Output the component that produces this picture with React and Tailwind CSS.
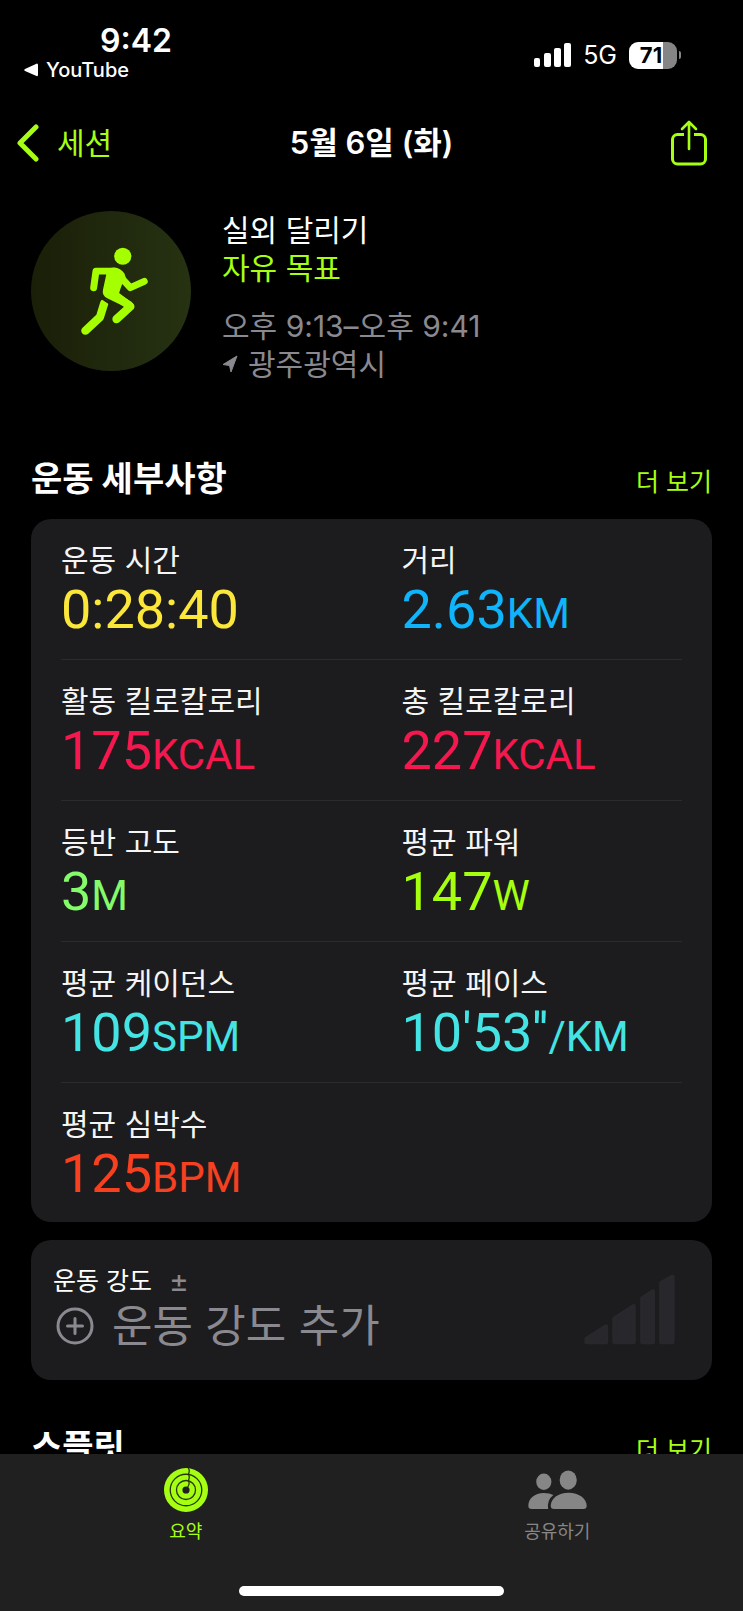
const metricRows = [
    [
        { label: "운동 시간", value: "0:28:40", unit: "", color: "text-[#fbe63a]" },
        { label: "거리", value: "2.63", unit: "KM", color: "text-[#0fb4fb]" },
    ],
    [
        { label: "활동 킬로칼로리", value: "175", unit: "KCAL", color: "text-[#f5184f]" },
        { label: "총 킬로칼로리", value: "227", unit: "KCAL", color: "text-[#f5184f]" },
    ],
    [
        { label: "등반 고도", value: "3", unit: "M", color: "text-[#84fb6a]" },
        { label: "평균 파워", value: "147", unit: "W", color: "text-[#a6ff0f]" },
    ],
    [
        { label: "평균 케이던스", value: "109", unit: "SPM", color: "text-[#45e4e4]" },
        { label: "평균 페이스", value: "10'53''", unit: "/KM", color: "text-[#45e4e4]" },
    ],
    [
        { label: "평균 심박수", value: "125", unit: "BPM", color: "text-[#f6401f]" },
    ],
]

function SignalIcon() {
    return (
        <svg width="37" height="24" viewBox="0 0 37 24" fill="currentColor" aria-hidden="true">
            <rect x="0" y="15" width="6" height="9" rx="2" />
            <rect x="10" y="10" width="7" height="14" rx="2" />
            <rect x="20" y="5" width="7" height="19" rx="2" />
            <rect x="30" y="0" width="7" height="24" rx="2" />
        </svg>
    )
}

function ShareIcon() {
    return (
        <svg
            width="36"
            height="46"
            viewBox="0 0 36 46"
            fill="none"
            stroke="currentColor"
            strokeWidth="3"
            strokeLinecap="round"
            strokeLinejoin="round"
            aria-hidden="true"
        >
            <path d="M13 14.500H6.500a5 5 0 0 0-5 5V39a5 5 0 0 0 5 5h23a5 5 0 0 0 5-5V19.500a5 5 0 0 0-5-5H23" strokeLinecap="butt" />
            <path d="M18 29V2.500M11 9l7-7 7 7" strokeWidth="2.600" />
        </svg>
    )
}

function RunnerIcon() {
    return (
        <svg className="h-[88px] w-[67px]" viewBox="241 170 202 266" aria-hidden="true">
            <g fill="none" stroke="#a6ff00" strokeLinecap="round" strokeLinejoin="round">
                <path d="M340 243H286L279 293" strokeWidth="21" />
                <path d="M354 254L390 293L432 274" strokeWidth="21" />
                <path d="M328 304L390 350L348 388" strokeWidth="25" />
                <path d="M311 340L298 382L254 423" strokeWidth="25" />
            </g>
            <path
                d="M312 236L342 232Q360 233 372 250L376 262Q366 276 360 296L355 312L394 336Q404 346 400 356L380 362L376 352L320 325Q304 316 307 300L317 254Z"
                fill="#a6ff00"
            />
            <circle cx="367" cy="198" r="26" fill="#a6ff00" />
            <path d="M294 318L332 343" stroke="#1f280e" strokeWidth="7" />
        </svg>
    )
}

function EffortBars() {
    return (
        <svg width="91" height="71" viewBox="638 166 274 212" fill="#28272c" stroke="#28272c" strokeWidth="14" strokeLinejoin="round" aria-hidden="true">
            <path d="M646 361L704 324V370H646Z" />
            <path d="M730 300L787 263V370H730Z" />
            <path d="M814 239L845 218V370H814Z" />
            <path d="M871 193L904 174V370H871Z" />
        </svg>
    )
}

function RingsIcon() {
    return (
        <svg width="44" height="44" viewBox="0 0 134 134" aria-hidden="true">
            <circle cx="67" cy="67" r="67" fill="#a6ff12" />
            <g fill="none" stroke="#243806" strokeWidth="4">
                <circle cx="67" cy="67" r="48" />
                <circle cx="67" cy="67" r="29" />
                <path d="M74 0Q80 9 74 19M74 19Q80 28 74 38M74 38Q80 48 72 58" />
            </g>
            <circle cx="67" cy="67" r="11" fill="#202020" />
        </svg>
    )
}

function PeopleIcon() {
    return (
        <svg width="59" height="40" viewBox="470 748 179 120" fill="#868686" aria-hidden="true">
            <ellipse cx="518" cy="783" rx="23" ry="25" />
            <path d="M471 856C471 834 490 817 518 817Q536 817 547 823Q527 838 531 866H481Q471 866 471 856Z" />
            <ellipse cx="592" cy="778" rx="26" ry="29" />
            <path d="M539 856C539 834 562 816 593 816S648 834 648 856Q648 866 638 866H549Q539 866 539 856Z" />
        </svg>
    )
}

function StatusBar() {
    return (
        <div className="flex h-[100px] items-start justify-between pl-6 pr-[62px] text-white">
            <div className="pt-6">
                <p className="pl-[76px] text-[32px] leading-[34px] font-semibold">9:42</p>
                <a href="#youtube" className="flex items-center gap-2 text-[20px] leading-6 font-medium">
                    <svg width="14" height="14" viewBox="0 0 14 14" fill="currentColor" aria-hidden="true">
                        <path d="M13 .500Q14 .500 14 2V12Q14 13.500 12.500 13L1 8Q-.500 7 1 6Z" />
                    </svg>
                    YouTube
                </a>
            </div>

            <div className="flex h-[110px] items-center">
                <SignalIcon />
                <span className="ml-3 text-[25px] leading-7">5G</span>
                <div className="ml-3 flex h-[27px] w-12 items-center justify-center rounded-[9px] bg-linear-to-r from-white from-70% to-[#858585] to-70% pr-1 text-[22px] leading-7 font-bold text-black">
                    71
                </div>
                <div className="ml-0.5 h-2 w-0.5 rounded-r-full bg-[#858585]" />
            </div>
        </div>
    )
}

function TitleBar() {
    return (
        <div className="grid h-[86px] grid-cols-3 items-center pr-9 pl-4">
            <a href="#sessions" className="flex items-center gap-4 text-[30px] leading-10 text-[#a6ff12]">
                <svg
                    width="25"
                    height="38"
                    viewBox="0 0 25 38"
                    fill="none"
                    stroke="currentColor"
                    strokeWidth="5"
                    strokeLinecap="round"
                    strokeLinejoin="round"
                    aria-hidden="true"
                >
                    <path d="M20 3L4 19L20 35" />
                </svg>
                세션
            </a>
            <h1 className="pl-5 text-center text-[31px] leading-10 font-semibold whitespace-nowrap text-white">
                5월 6일 (화)
            </h1>
            <button type="button" aria-label="공유" className="justify-self-end text-[#a6ff12]">
                <ShareIcon />
            </button>
        </div>
    )
}

function SectionHeader({ title, href }) {
    return (
        <div className="flex items-baseline justify-between">
            <h2 className="text-[34px] leading-10 font-bold text-white">{title}</h2>
            <a href={href} className="text-[25px] leading-8 text-[#a6ff12]">더 보기</a>
        </div>
    )
}

function Metric({ label, value, unit, color }) {
    return (
        <div>
            <dt className="text-[30px] leading-10 text-[#f5f5f5]">{label}</dt>
            <dd className={`font-[Roboto,sans-serif] text-[54px] leading-[60px] ${color}`}>
                {value}
                <span className="text-[42px] leading-none">{unit}</span>
            </dd>
        </div>
    )
}

export default function App() {
    return (
        <div className="flex h-screen flex-col bg-black font-['Inter','Noto_Sans_CJK_KR',sans-serif]">

            {/* Top bars */}
            <header className="shrink-0">
                <StatusBar />
                <TitleBar />
            </header>

            {/* Scrolling content */}
            <main className="min-h-0 flex-1 overflow-y-auto px-[31px] pt-[25px] [scrollbar-width:none]">

                <section className="flex gap-[31px]">
                    <div className="flex size-40 shrink-0 items-center justify-center rounded-full bg-linear-to-r from-[#1a1f08] to-[#263212] pl-1.5">
                        <RunnerIcon />
                    </div>
                    <div className="text-[30px] leading-[38px] text-[#8a898f]">
                        <p className="text-white">실외 달리기</p>
                        <p className="text-[#a6ff12]">자유 목표</p>
                        <p className="mt-5">오후 9:13–오후 9:41</p>
                        <p className="flex items-center gap-2.5">
                            <svg
                                width="16"
                                height="18"
                                viewBox="0 0 16 18"
                                fill="currentColor"
                                stroke="currentColor"
                                strokeLinejoin="round"
                                aria-hidden="true"
                            >
                                <path d="M15 1L9 17L7.500 10.500L1 9.500Z" />
                            </svg>
                            광주광역시
                        </p>
                    </div>
                </section>

                <section className="mt-[76px]">
                    <SectionHeader title="운동 세부사항" href="#details" />

                    <dl className="mt-5 rounded-[20px] bg-[#1c1c1e] px-[30px]">
                        {metricRows.map((row) => (
                            <div
                                key={row[0].label}
                                className="grid grid-cols-2 gap-x-[60px] border-b border-[#2b2b2d] pt-[21px] pb-[19px] last:border-0 last:pb-[18px]"
                            >
                                {row.map((metric) => (
                                    <Metric key={metric.label} {...metric} />
                                ))}
                            </div>
                        ))}
                    </dl>

                    <div className="mt-[18px] flex items-center justify-between rounded-[20px] bg-[#1c1c1e] pt-[26px] pr-[37px] pb-7 pl-[22px]">
                        <div>
                            <p className="flex items-center gap-[17px] text-[25px] leading-[30px] text-white">
                                운동 강도
                                <span className="text-[30px] text-[#8a898f]">±</span>
                            </p>
                            <button type="button" className="mt-1 flex items-center gap-[18px] pl-[3px] text-[44px] leading-[52px] text-[#8a898f]">
                                <svg
                                    width="38"
                                    height="38"
                                    viewBox="0 0 38 38"
                                    fill="none"
                                    stroke="currentColor"
                                    strokeWidth="3"
                                    strokeLinecap="round"
                                    aria-hidden="true"
                                >
                                    <circle cx="19" cy="19" r="17" />
                                    <path d="M19 11.500V26.500M11.500 19H26.500" />
                                </svg>
                                운동 강도 추가
                            </button>
                        </div>
                        <EffortBars />
                    </div>
                </section>

                <section className="mt-[47px]">
                    <SectionHeader title="스플릿" href="#splits" />
                </section>

            </main>

            {/* Tab bar */}
            <footer className="shrink-0 bg-[#202020]">
                <nav className="grid grid-cols-2 pt-3 text-[18px] leading-6">
                    <a href="#summary" aria-current="page" className="flex flex-col items-center text-[#a6ff12]">
                        <span className="flex h-12 items-center">
                            <RingsIcon />
                        </span>
                        <span className="mt-1.5">요약</span>
                    </a>
                    <a href="#sharing" className="flex flex-col items-center text-[#868686]">
                        <span className="flex h-12 items-center">
                            <PeopleIcon />
                        </span>
                        <span className="mt-1.5">공유하기</span>
                    </a>
                </nav>
                <div className="mx-auto mt-[42px] mb-[15px] h-2.5 w-[265px] rounded-full bg-white" />
            </footer>

        </div>
    )
}
